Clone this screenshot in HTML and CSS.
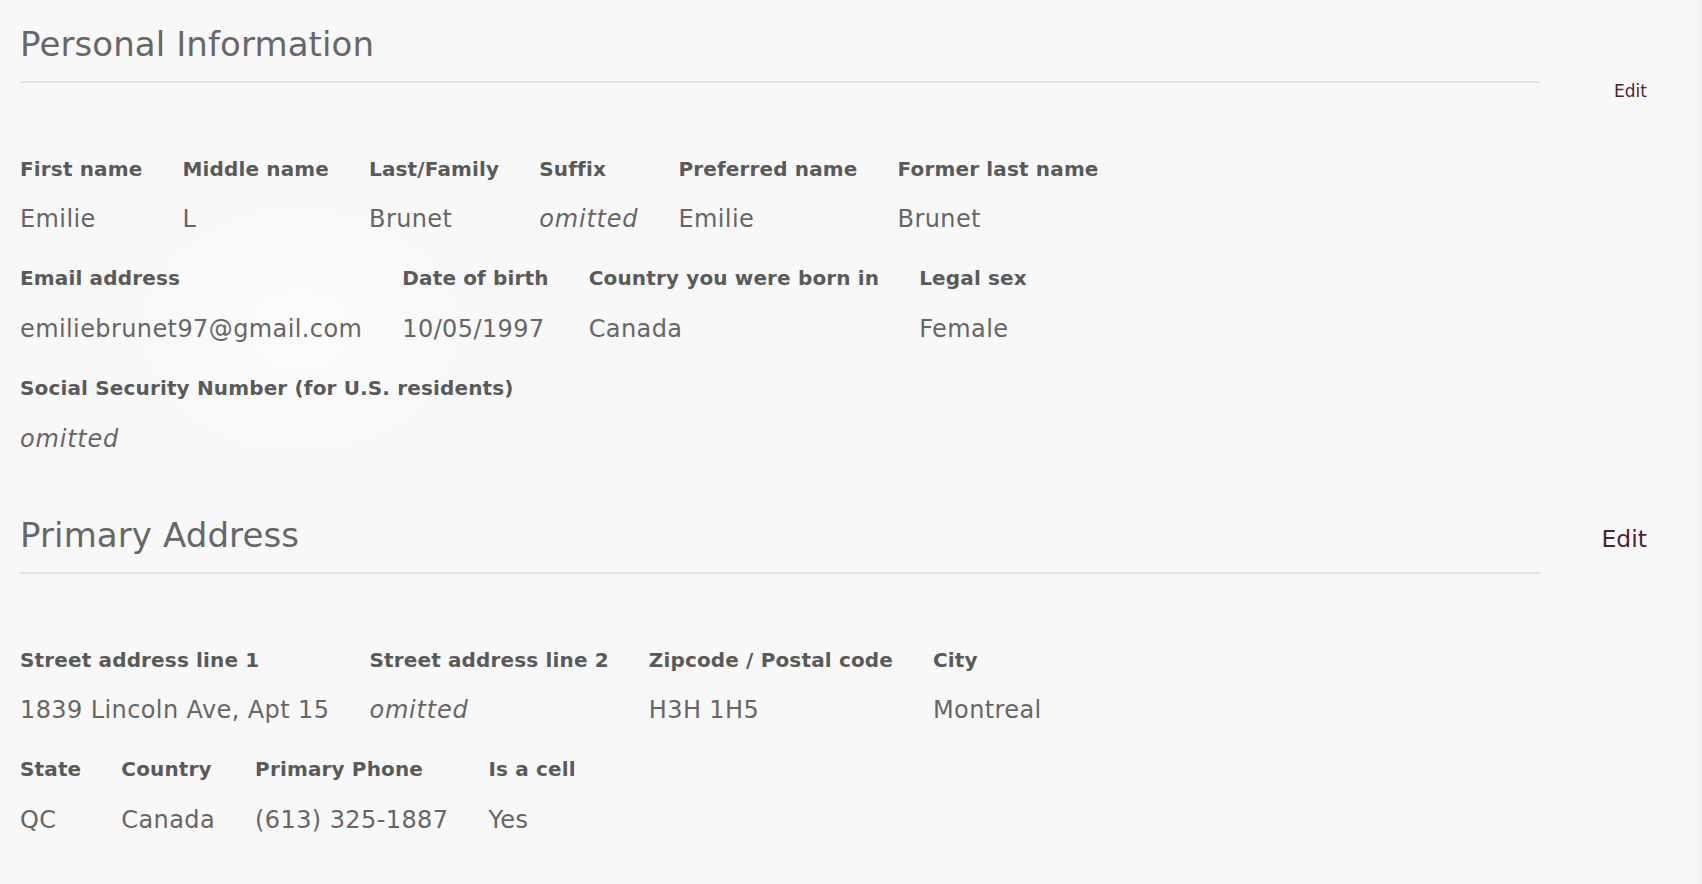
FILE: index.html
```html
<!DOCTYPE html>
<html lang="en">
<head>
<meta charset="utf-8">
<title>Profile</title>
<link rel="stylesheet" href="styles.css">
</head>
<body>
<main class="page">
  <section class="section">
    <div class="section-head">
      <div class="head-main">
        <h2 class="section-title">Personal Information</h2>
        <hr class="rule">
      </div>
      <div class="head-side head-side--low"><a class="edit edit--small" href="#">Edit</a></div>
    </div>
    <div class="fields">
      <div class="field-row">
        <div class="field"><div class="label">First name</div><div class="value">Emilie</div></div>
        <div class="field"><div class="label">Middle name</div><div class="value">L</div></div>
        <div class="field"><div class="label">Last/Family</div><div class="value">Brunet</div></div>
        <div class="field"><div class="label">Suffix</div><div class="value omitted">omitted</div></div>
        <div class="field"><div class="label">Preferred name</div><div class="value">Emilie</div></div>
        <div class="field"><div class="label">Former last name</div><div class="value">Brunet</div></div>
      </div>
      <div class="field-row">
        <div class="field"><div class="label">Email address</div><div class="value">emiliebrunet97@gmail.com</div></div>
        <div class="field"><div class="label">Date of birth</div><div class="value">10/05/1997</div></div>
        <div class="field"><div class="label">Country you were born in</div><div class="value">Canada</div></div>
        <div class="field"><div class="label">Legal sex</div><div class="value">Female</div></div>
      </div>
      <div class="field-row">
        <div class="field"><div class="label">Social Security Number (for U.S. residents)</div><div class="value omitted">omitted</div></div>
      </div>
    </div>
  </section>

  <section class="section">
    <div class="section-head">
      <div class="head-main">
        <h2 class="section-title">Primary Address</h2>
        <hr class="rule">
      </div>
      <div class="head-side head-side--high"><a class="edit edit--large" href="#">Edit</a></div>
    </div>
    <div class="fields">
      <div class="field-row">
        <div class="field"><div class="label">Street address line 1</div><div class="value">1839 Lincoln Ave, Apt 15</div></div>
        <div class="field"><div class="label">Street address line 2</div><div class="value omitted">omitted</div></div>
        <div class="field"><div class="label">Zipcode / Postal code</div><div class="value">H3H 1H5</div></div>
        <div class="field"><div class="label">City</div><div class="value">Montreal</div></div>
      </div>
      <div class="field-row">
        <div class="field"><div class="label">State</div><div class="value">QC</div></div>
        <div class="field"><div class="label">Country</div><div class="value">Canada</div></div>
        <div class="field"><div class="label">Primary Phone</div><div class="value">(613) 325-1887</div></div>
        <div class="field"><div class="label">Is a cell</div><div class="value">Yes</div></div>
      </div>
    </div>
  </section>
</main>
</body>
</html>
```

FILE: styles.css
```css
html, body {
  margin: 0;
  padding: 0;
}

body {
  min-height: 884px;
  font-family: "DejaVu Sans", "Liberation Sans", sans-serif;
  color: #686868;
  background-color: #f8f8f8;
  background-image:
    radial-gradient(ellipse 180px 120px at 1180px 170px, rgba(0,0,0,0.008), rgba(0,0,0,0) 70%),
    radial-gradient(ellipse 220px 200px at 1450px 280px, rgba(0,0,0,0.007), rgba(0,0,0,0) 70%),
    radial-gradient(ellipse 300px 220px at 1400px 700px, rgba(0,0,0,0.007), rgba(0,0,0,0) 70%),
    radial-gradient(ellipse 260px 200px at 300px 330px, rgba(255,255,255,0.5), rgba(255,255,255,0) 70%),
    linear-gradient(to left, rgba(0,0,0,0.03), rgba(0,0,0,0) 8px);
}

.page {
  padding: 24px 0 40px 20px;
}

.section + .section {
  margin-top: 62.4px;
}

.section-head {
  display: flex;
  align-items: flex-start;
}

.head-main {
  flex: 1;
}

.section-title {
  margin: 0;
  font-weight: normal;
  font-size: 34px;
  line-height: 40px;
  letter-spacing: 0.1px;
  color: #676767;
  white-space: nowrap;
}

.rule {
  margin: 17px 0 0;
  border: 0;
  height: 2px;
  background: #e3e3e3;
}

.head-side {
  width: 162px;
  box-sizing: border-box;
  padding-right: 55px;
  display: flex;
  justify-content: flex-end;
}

.head-side--low {
  padding-top: 56.8px;
  margin-bottom: -17.8px;
}

.head-side--high {
  padding-top: 11px;
}

.edit {
  color: #4e2336;
  text-decoration: none;
}

.edit--small {
  font-size: 17px;
  line-height: 20px;
}

.edit--large {
  font-size: 23.5px;
  line-height: 27px;
}

.fields {
  margin-top: 73.8px;
}

.field-row {
  display: flex;
  gap: 40px;
  margin-bottom: 33px;
}

.field-row:last-child {
  margin-bottom: 0;
}

.label {
  font-weight: bold;
  font-size: 20px;
  line-height: 24px;
  letter-spacing: 0.15px;
  color: #5a5a5a;
  margin-bottom: 24.6px;
  white-space: nowrap;
}

.value {
  font-size: 24px;
  line-height: 28px;
  letter-spacing: 0.4px;
  color: #666666;
  white-space: nowrap;
}

.omitted {
  font-style: italic;
  letter-spacing: 0.8px;
}
```
